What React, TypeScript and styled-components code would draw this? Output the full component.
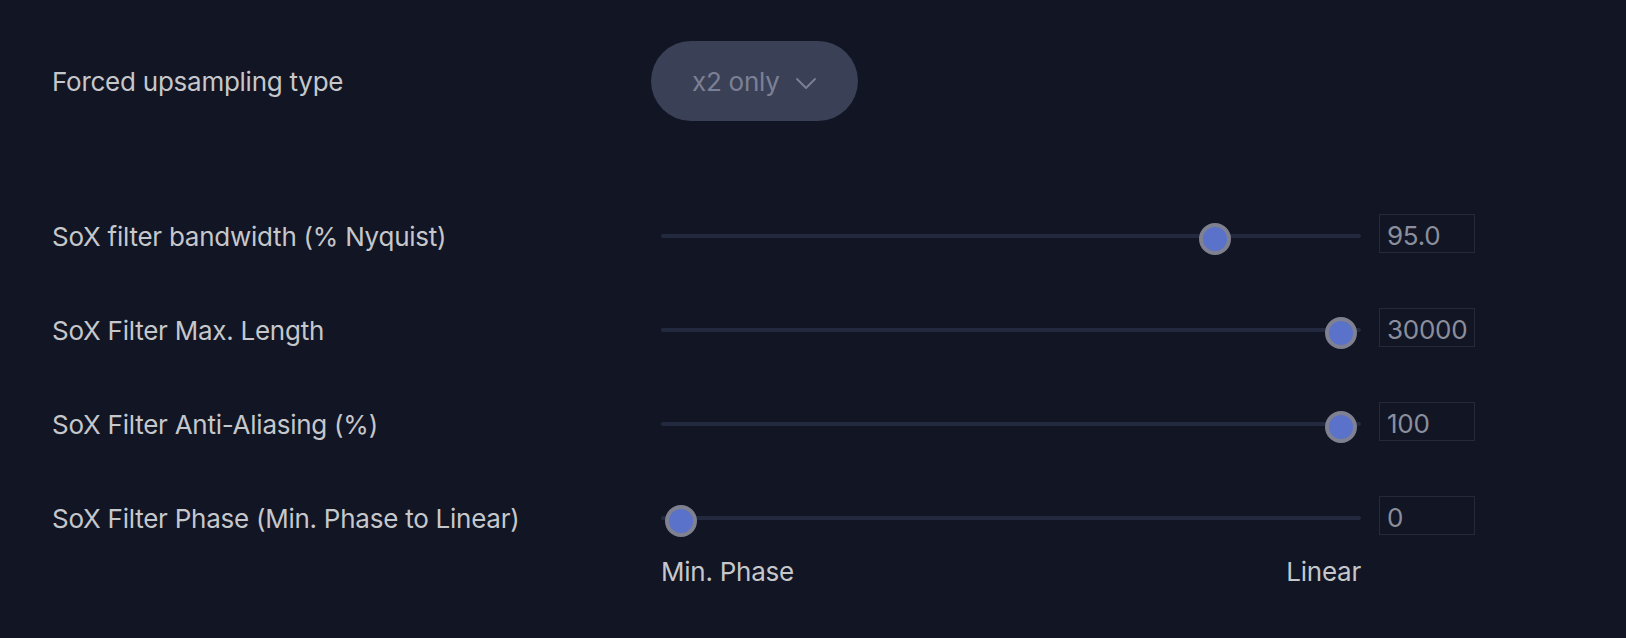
import React from "react";
import styled, { createGlobalStyle } from "styled-components";

const GlobalStyle = createGlobalStyle`
  html, body {
    margin: 0;
    padding: 0;
    background: #111524;
  }
  body {
    font-family: Inter, "Noto Sans", "Liberation Sans", sans-serif;
    letter-spacing: -0.25px;
    -webkit-font-smoothing: antialiased;
  }
`;

const Settings = styled.div`
  width: 100%;
  min-height: 638px;
  box-sizing: border-box;
  padding: 41px 0 0 52px;
  display: flex;
  flex-direction: column;
  background: #111524;
`;

const SelectRow = styled.div`
  display: flex;
  align-items: center;
  height: 80px;
  margin-bottom: 95px;
`;

const Label = styled.div<{ $width: number }>`
  width: ${(p) => p.$width}px;
  flex-shrink: 0;
  font-size: 26px;
  line-height: 32px;
  padding-top: 2px;
  color: #c6c7cb;
  white-space: nowrap;
`;

const Pill = styled.button`
  height: 80px;
  width: 207px;
  box-sizing: border-box;
  padding: 0 0 0 41px;
  border: none;
  border-radius: 40px;
  background: #3a4157;
  display: flex;
  align-items: center;
  gap: 16px;
  font-family: inherit;
  letter-spacing: inherit;
  font-size: 26px;
  color: #7c8094;
  cursor: pointer;
`;

const Chevron = styled.svg`
  width: 20px;
  height: 11px;
  margin-top: 4px;
`;

const SliderList = styled.div`
  display: flex;
  flex-direction: column;
  gap: 54px;
`;

const SliderField = styled.div`
  display: flex;
  flex-direction: column;
`;

const SliderRow = styled.div`
  display: flex;
  align-items: center;
  height: 40px;
`;

const Track = styled.div`
  position: relative;
  width: 700px;
  height: 4px;
  border-radius: 2px;
  background: #232a40;
  flex-shrink: 0;
`;

// thumb sits over the track, inset 20px on both ends
const ThumbLane = styled.div`
  position: absolute;
  left: 20px;
  right: 20px;
  top: 0;
  bottom: 0;
`;

const Thumb = styled.div`
  position: absolute;
  top: 2px;
  width: 32px;
  height: 32px;
  box-sizing: border-box;
  border-radius: 50%;
  background: #5a72c9;
  border: 4px solid #7f8191;
  transform: translate(-50%, -50%) translateY(3px);
`;

const ValueBox = styled.div`
  align-self: flex-start;
  width: 96px;
  height: 39px;
  margin: -2px 0 0 18px;
  box-sizing: border-box;
  border: 1px solid #252a3a;
  padding: 3px 0 0 7px;
  display: flex;
  align-items: center;
  font-size: 26px;
  color: #8b8e9c;
  overflow: hidden;
`;

const Ticks = styled.div`
  display: flex;
  justify-content: space-between;
  width: 700px;
  margin: 18px 0 0 609px;
  font-size: 26px;
  line-height: 32px;
  color: #c6c7cb;
`;

type SliderProps = {
  label: string;
  value: string;
  pos: number;
  ticks?: [string, string];
};

function Slider({ label, value, pos, ticks }: SliderProps) {
  return (
    <SliderField>
      <SliderRow>
        <Label $width={609}>{label}</Label>
        <Track>
          <ThumbLane>
            <Thumb style={{ left: `${pos * 100}%` }} />
          </ThumbLane>
        </Track>
        <ValueBox>{value}</ValueBox>
      </SliderRow>
      {ticks && (
        <Ticks>
          <span>{ticks[0]}</span>
          <span>{ticks[1]}</span>
        </Ticks>
      )}
    </SliderField>
  );
}

const sliders: SliderProps[] = [
  { label: "SoX filter bandwidth (% Nyquist)", value: "95.0", pos: 0.809 },
  { label: "SoX Filter Max. Length", value: "30000", pos: 1 },
  { label: "SoX Filter Anti-Aliasing (%)", value: "100", pos: 1 },
  {
    label: "SoX Filter Phase (Min. Phase to Linear)",
    value: "0",
    pos: 0,
    ticks: ["Min. Phase", "Linear"],
  },
];

export default function App() {
  return (
    <>
      <GlobalStyle />
      <Settings>
        <SelectRow>
          <Label $width={599}>Forced upsampling type</Label>
          <Pill>
            <span>x2 only</span>
            <Chevron viewBox="0 0 20 11" fill="none">
              <path d="M1 1 L10 10 L19 1" stroke="#7c8094" strokeWidth="1.8" strokeLinecap="round" strokeLinejoin="round" />
            </Chevron>
          </Pill>
        </SelectRow>
        <SliderList>
          {sliders.map((s) => (
            <Slider key={s.label} {...s} />
          ))}
        </SliderList>
      </Settings>
    </>
  );
}
